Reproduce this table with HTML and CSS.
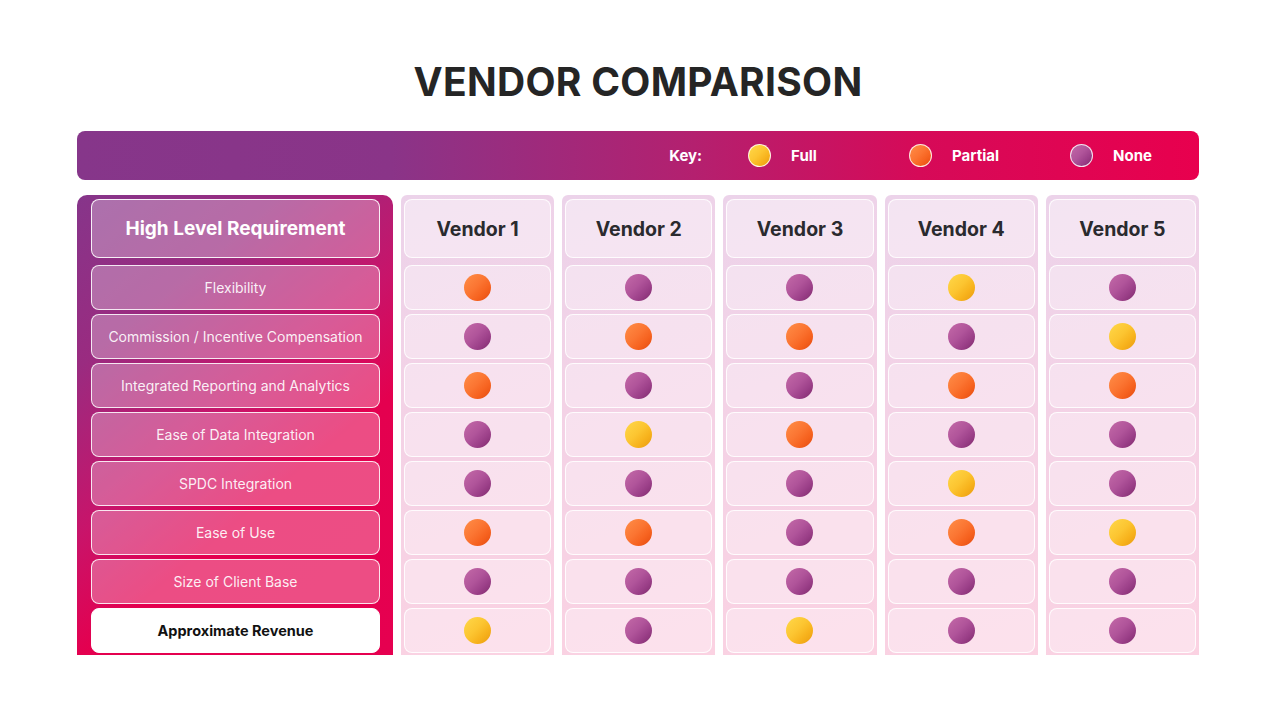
FILE: index.html
```html
<!DOCTYPE html>
<html lang="en">
<head>
<meta charset="utf-8">
<title>Vendor Comparison</title>
<link rel="stylesheet" href="styles.css">
</head>
<body>
<main class="slide">
  <h1 class="title">VENDOR COMPARISON</h1>

  <div class="keybar">
    <span class="key-label">Key:</span>
    <span class="key-item key-item--wide"><span class="ball ball--key ball--full"></span>Full</span>
    <span class="key-item key-item--wide"><span class="ball ball--key ball--partial"></span>Partial</span>
    <span class="key-item"><span class="ball ball--key ball--none"></span>None</span>
  </div>

  <div class="table">
    <section class="req-col">
      <div class="req-head">High Level Requirement</div>
      <div class="req-rows">
        <div class="req-cell">Flexibility</div>
        <div class="req-cell">Commission / Incentive Compensation</div>
        <div class="req-cell">Integrated Reporting and Analytics</div>
        <div class="req-cell">Ease of Data Integration</div>
        <div class="req-cell">SPDC Integration</div>
        <div class="req-cell">Ease of Use</div>
        <div class="req-cell">Size of Client Base</div>
        <div class="req-cell req-cell--highlight">Approximate Revenue</div>
      </div>
    </section>

    <section class="vendor-col">
      <div class="vendor-head">Vendor 1</div>
      <div class="vendor-rows">
        <div class="vendor-cell"><span class="ball ball--partial"></span></div>
        <div class="vendor-cell"><span class="ball ball--none"></span></div>
        <div class="vendor-cell"><span class="ball ball--partial"></span></div>
        <div class="vendor-cell"><span class="ball ball--none"></span></div>
        <div class="vendor-cell"><span class="ball ball--none"></span></div>
        <div class="vendor-cell"><span class="ball ball--partial"></span></div>
        <div class="vendor-cell"><span class="ball ball--none"></span></div>
        <div class="vendor-cell"><span class="ball ball--full"></span></div>
      </div>
    </section>

    <section class="vendor-col">
      <div class="vendor-head">Vendor 2</div>
      <div class="vendor-rows">
        <div class="vendor-cell"><span class="ball ball--none"></span></div>
        <div class="vendor-cell"><span class="ball ball--partial"></span></div>
        <div class="vendor-cell"><span class="ball ball--none"></span></div>
        <div class="vendor-cell"><span class="ball ball--full"></span></div>
        <div class="vendor-cell"><span class="ball ball--none"></span></div>
        <div class="vendor-cell"><span class="ball ball--partial"></span></div>
        <div class="vendor-cell"><span class="ball ball--none"></span></div>
        <div class="vendor-cell"><span class="ball ball--none"></span></div>
      </div>
    </section>

    <section class="vendor-col">
      <div class="vendor-head">Vendor 3</div>
      <div class="vendor-rows">
        <div class="vendor-cell"><span class="ball ball--none"></span></div>
        <div class="vendor-cell"><span class="ball ball--partial"></span></div>
        <div class="vendor-cell"><span class="ball ball--none"></span></div>
        <div class="vendor-cell"><span class="ball ball--partial"></span></div>
        <div class="vendor-cell"><span class="ball ball--none"></span></div>
        <div class="vendor-cell"><span class="ball ball--none"></span></div>
        <div class="vendor-cell"><span class="ball ball--none"></span></div>
        <div class="vendor-cell"><span class="ball ball--full"></span></div>
      </div>
    </section>

    <section class="vendor-col">
      <div class="vendor-head">Vendor 4</div>
      <div class="vendor-rows">
        <div class="vendor-cell"><span class="ball ball--full"></span></div>
        <div class="vendor-cell"><span class="ball ball--none"></span></div>
        <div class="vendor-cell"><span class="ball ball--partial"></span></div>
        <div class="vendor-cell"><span class="ball ball--none"></span></div>
        <div class="vendor-cell"><span class="ball ball--full"></span></div>
        <div class="vendor-cell"><span class="ball ball--partial"></span></div>
        <div class="vendor-cell"><span class="ball ball--none"></span></div>
        <div class="vendor-cell"><span class="ball ball--none"></span></div>
      </div>
    </section>

    <section class="vendor-col">
      <div class="vendor-head">Vendor 5</div>
      <div class="vendor-rows">
        <div class="vendor-cell"><span class="ball ball--none"></span></div>
        <div class="vendor-cell"><span class="ball ball--full"></span></div>
        <div class="vendor-cell"><span class="ball ball--partial"></span></div>
        <div class="vendor-cell"><span class="ball ball--none"></span></div>
        <div class="vendor-cell"><span class="ball ball--none"></span></div>
        <div class="vendor-cell"><span class="ball ball--full"></span></div>
        <div class="vendor-cell"><span class="ball ball--none"></span></div>
        <div class="vendor-cell"><span class="ball ball--none"></span></div>
      </div>
    </section>
  </div>
</main>
</body>
</html>
```

FILE: styles.css
```css
* { box-sizing: border-box; }

html, body {
  margin: 0;
  padding: 0;
  background: #ffffff;
}

body {
  font-family: "Inter", "Noto Sans", "Liberation Sans", sans-serif;
  color: #262626;
  width: 1280px;
  height: 720px;
  overflow: hidden;
}

.slide {
  padding: 0 81px 0 77px;
  display: flex;
  flex-direction: column;
}

.title {
  margin: 0;
  padding-top: 58px;
  height: 131px;
  text-align: center;
  font-size: 39px;
  line-height: 48px;
  font-weight: 700;
  letter-spacing: 0.3px;
  color: #252525;
}

.keybar {
  height: 49px;
  border-radius: 8px;
  background: linear-gradient(90deg, #86368a 0%, #8a3488 28%, #b4206f 55%, #d60a58 75%, #e8004e 100%);
  display: flex;
  align-items: center;
  justify-content: flex-end;
  padding-right: 47px;
  color: #ffffff;
  font-weight: 700;
  font-size: 15px;
}

.key-label {
  margin-right: 46px;
}

.key-item {
  display: flex;
  align-items: center;
  gap: 20px;
}

.key-item--wide {
  width: 161px;
}

.table {
  margin-top: 15px;
  display: grid;
  grid-template-columns: 316px repeat(5, 1fr);
  column-gap: 8px;
  height: 460px;
}

.req-col {
  border-radius: 10px 10px 0 0;
  background: linear-gradient(140deg, #86358a 0%, #9a2b80 24%, #c8146a 47%, #e4004f 64%, #e60050 100%);
  padding: 4px 13px 2px 14px;
  display: flex;
  flex-direction: column;
}

.req-head {
  height: 59px;
  border: 1px solid rgba(255, 255, 255, 0.9);
  border-radius: 8px;
  background: rgba(255, 255, 255, 0.3);
  color: #ffffff;
  font-size: 19px;
  font-weight: 700;
  display: flex;
  align-items: center;
  justify-content: center;
}

.req-rows,
.vendor-rows {
  margin-top: 7px;
  display: flex;
  flex-direction: column;
  gap: 4px;
}

.req-cell {
  height: 45px;
  border: 1px solid rgba(255, 255, 255, 0.85);
  border-radius: 8px;
  background: rgba(255, 255, 255, 0.3);
  color: rgba(255, 255, 255, 0.92);
  font-size: 14px;
  display: flex;
  align-items: center;
  justify-content: center;
  white-space: nowrap;
}

.req-cell--highlight {
  background: #ffffff;
  border-color: #ffffff;
  color: #111111;
  font-weight: 700;
  font-size: 14.5px;
}

.vendor-col {
  border-radius: 6px 6px 0 0;
  background: linear-gradient(160deg, #ecd3ea 0%, #f3d2e6 40%, #fbd2e2 100%);
  padding: 4px 3px 2px;
  display: flex;
  flex-direction: column;
}

.vendor-head {
  height: 59px;
  border: 1px solid rgba(255, 255, 255, 0.85);
  border-radius: 8px;
  background: rgba(255, 255, 255, 0.4);
  font-size: 19.5px;
  font-weight: 700;
  color: #2a2a2e;
  display: flex;
  align-items: center;
  justify-content: center;
}

.vendor-cell {
  height: 45px;
  border: 1px solid rgba(255, 255, 255, 0.85);
  border-radius: 8px;
  background: rgba(255, 255, 255, 0.35);
  display: flex;
  align-items: center;
  justify-content: center;
}

.ball {
  display: inline-block;
  width: 27px;
  height: 27px;
  border-radius: 50%;
  flex: none;
}

.ball--key {
  width: 23px;
  height: 23px;
  border: 1px solid rgba(255, 255, 255, 0.85);
}

.ball--full {
  background: linear-gradient(135deg, #ffd84a 0%, #fcc531 45%, #f7b21c 70%, #e99a10 100%);
}

.ball--partial {
  background: linear-gradient(135deg, #ff8e48 0%, #fb7532 45%, #f6621f 70%, #e34a10 100%);
}

.ball--none {
  background: linear-gradient(135deg, #c46aa8 0%, #b0549a 45%, #9c4089 70%, #7e2a6c 100%);
}
```
